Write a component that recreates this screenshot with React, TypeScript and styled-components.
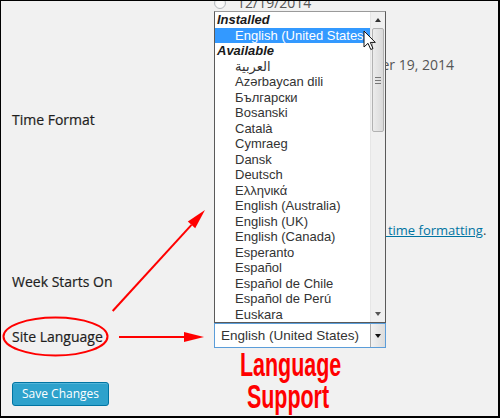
import React from 'react';
import styled, { createGlobalStyle } from 'styled-components';

const GlobalStyle = createGlobalStyle`
  html, body {
    margin: 0;
    padding: 0;
    background: #fff;
  }
  * { box-sizing: border-box; }
`;

// --- PAGE FRAME ---
const Frame = styled.div`
  position: relative;
  width: 500px;
  height: 418px;
  overflow: hidden;
  background: #f1f1f1;
  border: 1px solid #000;
  border-right-width: 2px;
  border-bottom-width: 2px;
  padding-left: 11px;
  font-family: 'Open Sans', 'Liberation Sans', sans-serif;
  font-size: 13px;
  color: #444;
`;

const FormRow = styled.div<{ $h: number }>`
  display: grid;
  grid-template-columns: 202px 1fr;
  height: ${({ $h }) => $h}px;
`;

const RowLabel = styled.div<{ $pt: number }>`
  padding-top: ${({ $pt }) => $pt}px;
  font-size: 14px;
  font-weight: 400;
  line-height: 20px;
  color: #1e1e1e;
  -webkit-text-stroke: 0.2px #1e1e1e;
`;

const FieldCell = styled.div`
  display: flex;
  flex-direction: column;
  align-items: flex-start;
`;

const RadioLine = styled.label`
  display: flex;
  align-items: center;
  gap: 11px;
  margin-top: -8px;
  line-height: 20px;
  font-size: 14px;
  color: #555;
`;

const Radio = styled.span`
  width: 12px;
  height: 12px;
  border-radius: 50%;
  border: 1px solid #b4b9be;
  background: #fafafa;
  box-shadow: inset 0 1px 2px rgba(0, 0, 0, 0.1);
`;

const PreviewLine = styled.div`
  width: 240px;
  margin-top: 42px;
  text-align: right;
  line-height: 20px;
  font-size: 14px;
  color: #555;
`;

const DocLine = styled.div`
  margin-top: 119px;
  line-height: 20px;
  white-space: nowrap;
`;

const DocLink = styled.a`
  color: #0074a2;
  text-decoration: underline;
`;

// --- SELECT + OPEN LIST ---
const SelectWrap = styled.div`
  position: relative;
  width: 172px;
`;

const SelectBox = styled.div`
  display: flex;
  align-items: center;
  height: 25px;
  background: #fff;
  border: 1px solid #5b9dd9;
  font-family: 'Liberation Sans', 'DejaVu Sans', sans-serif;
  font-size: 13.5px;
  color: #333;
`;

const SelectText = styled.span`
  flex: 1;
  padding-left: 6px;
`;

const ArrowBtn = styled.span`
  display: flex;
  align-items: center;
  justify-content: center;
  width: 15px;
  height: 100%;
  background: linear-gradient(to right, #f2f2f2, #dcdcdc);
  border-left: 1px solid #acacac;
`;

const Tri = styled.span<{ $up?: boolean; $c?: string }>`
  width: 0;
  height: 0;
  border-left: 3.5px solid transparent;
  border-right: 3.5px solid transparent;
  ${({ $up, $c }) =>
    $up
      ? `border-bottom: 4px solid ${$c || '#111'};`
      : `border-top: 4px solid ${$c || '#111'};`}
`;

const DropList = styled.div`
  position: absolute;
  left: 0;
  bottom: 100%;
  width: 172px;
  height: 312px;
  display: flex;
  background: #fff;
  border: 1px solid #5a5a5a;
  border-top-color: #9a9a9a;
  z-index: 2;
  font-family: 'Liberation Sans', 'DejaVu Sans', sans-serif;
  font-size: 13px;
`;

const ListItems = styled.div`
  flex: 1;
  display: flex;
  flex-direction: column;
`;

const ListRow = styled.div<{ $kind: 'group' | 'selected' | 'option' }>`
  height: 15.5px;
  line-height: 15.5px;
  white-space: nowrap;
  padding-left: ${({ $kind }) => ($kind === 'group' ? 2 : 20)}px;
  font-weight: ${({ $kind }) => ($kind === 'group' ? 700 : 400)};
  font-style: ${({ $kind }) => ($kind === 'group' ? 'italic' : 'normal')};
  color: ${({ $kind }) => ($kind === 'group' ? '#1a1a1a' : $kind === 'selected' ? '#fff' : '#333')};
  background: ${({ $kind }) => ($kind === 'selected' ? '#3399ff' : 'transparent')};
`;

const Scrollbar = styled.div`
  width: 15px;
  display: flex;
  flex-direction: column;
  background: #f0f0f0;
  border-left: 1px solid #e6e6e6;
`;

const ScrollBtn = styled.div`
  height: 16px;
  display: flex;
  align-items: center;
  justify-content: center;
`;

const Thumb = styled.div`
  height: 104px;
  margin: 0 1px 0 1px;
  display: flex;
  align-items: center;
  justify-content: center;
  border: 1px solid #b2b2b2;
  border-radius: 2px;
  background: linear-gradient(to right, #ececec, #dadada);
`;

const Grip = styled.div`
  width: 6px;
  height: 7px;
  border-top: 1px solid #777;
  border-bottom: 1px solid #777;
  display: flex;
  align-items: center;

  &::before {
    content: '';
    width: 100%;
    height: 1px;
    background: #777;
  }
`;

const Track = styled.div`
  flex: 1;
`;

const Caption = styled.div`
  position: absolute;
  top: 100%;
  left: 0;
  width: 148px;
  margin-top: 1px;
  text-align: center;
  font-family: 'Liberation Sans', sans-serif;
  font-weight: 700;
  font-size: 33px;
  line-height: 32px;
  color: #ff0000;
  transform: scaleX(0.65);
  pointer-events: none;
`;

// --- SUBMIT ---
const SubmitRow = styled.div`
  padding-top: 19px;
`;

const SaveButton = styled.button`
  height: 24px;
  padding: 0 9px;
  font-family: 'Open Sans', 'Liberation Sans', sans-serif;
  font-size: 12px;
  line-height: 22px;
  color: #fff;
  background: #2ea2cc;
  border: 1px solid #0074a2;
  border-radius: 3px;
  box-shadow: inset 0 1px 0 rgba(120, 200, 230, 0.5);
`;

// --- ANNOTATIONS ---
const Overlay = styled.svg`
  position: absolute;
  top: -1px;
  left: -1px;
  width: 500px;
  height: 418px;
  z-index: 3;
  pointer-events: none;
`;

const languages = [
  'العربية',
  'Azərbaycan dili',
  'Български',
  'Bosanski',
  'Català',
  'Cymraeg',
  'Dansk',
  'Deutsch',
  'Ελληνικά',
  'English (Australia)',
  'English (UK)',
  'English (Canada)',
  'Esperanto',
  'Español',
  'Español de Chile',
  'Español de Perú',
  'Euskara',
];

export default function App() {
  return (
    <>
      <GlobalStyle />
      <Frame>
        <FormRow $h={100}>
          <div />
          <FieldCell>
            <RadioLine>
              <Radio />
              12/19/2014
            </RadioLine>
            <PreviewLine>December 19, 2014</PreviewLine>
          </FieldCell>
        </FormRow>

        <FormRow $h={160}>
          <RowLabel $pt={9}>Time Format</RowLabel>
          <FieldCell>
            <DocLine>
              <DocLink href="#">Documentation on date and time formatting</DocLink>.
            </DocLine>
          </FieldCell>
        </FormRow>

        <FormRow $h={62}>
          <RowLabel $pt={11}>Week Starts On</RowLabel>
          <div />
        </FormRow>

        <FormRow $h={40}>
          <RowLabel $pt={4}>Site Language</RowLabel>
          <FieldCell>
            <SelectWrap>
              <DropList>
                <ListItems>
                  <ListRow $kind="group">Installed</ListRow>
                  <ListRow $kind="selected">English (United States)</ListRow>
                  <ListRow $kind="group">Available</ListRow>
                  {languages.map((l) => (
                    <ListRow key={l} $kind="option">
                      {l}
                    </ListRow>
                  ))}
                </ListItems>
                <Scrollbar>
                  <ScrollBtn>
                    <Tri $up $c="#333" />
                  </ScrollBtn>
                  <Thumb>
                    <Grip />
                  </Thumb>
                  <Track />
                  <ScrollBtn>
                    <Tri $c="#555" />
                  </ScrollBtn>
                </Scrollbar>
              </DropList>
              <SelectBox>
                <SelectText>English (United States)</SelectText>
                <ArrowBtn>
                  <Tri />
                </ArrowBtn>
              </SelectBox>
              <Caption>
                Language
                <br />
                Support
              </Caption>
            </SelectWrap>
          </FieldCell>
        </FormRow>

        <SubmitRow>
          <SaveButton>Save Changes</SaveButton>
        </SubmitRow>

        <Overlay viewBox="0 0 500 418">
          {/* mouse pointer */}
          <path
            d="M364 31 L364 47 L368 43.3 L370.8 49.5 L373 48.5 L370.3 42.4 L375.3 42.4 Z"
            fill="#fff"
            stroke="#111"
            strokeWidth="1"
            strokeLinejoin="round"
          />
          {/* diagonal arrow */}
          <line x1="112.7" y1="311" x2="191.5" y2="224.8" stroke="#f00" strokeWidth="2" />
          <polygon points="205,210 195.2,228.2 187.8,221.4" fill="#f00" />
          {/* horizontal arrow */}
          <line x1="119" y1="337" x2="186" y2="337" stroke="#f00" strokeWidth="2" />
          <polygon points="204,337 184,332 184,342" fill="#f00" />
          {/* ellipse round label */}
          <ellipse cx="55.5" cy="336.5" rx="52" ry="19" fill="none" stroke="#f00" strokeWidth="2" />
        </Overlay>
      </Frame>
    </>
  );
}
